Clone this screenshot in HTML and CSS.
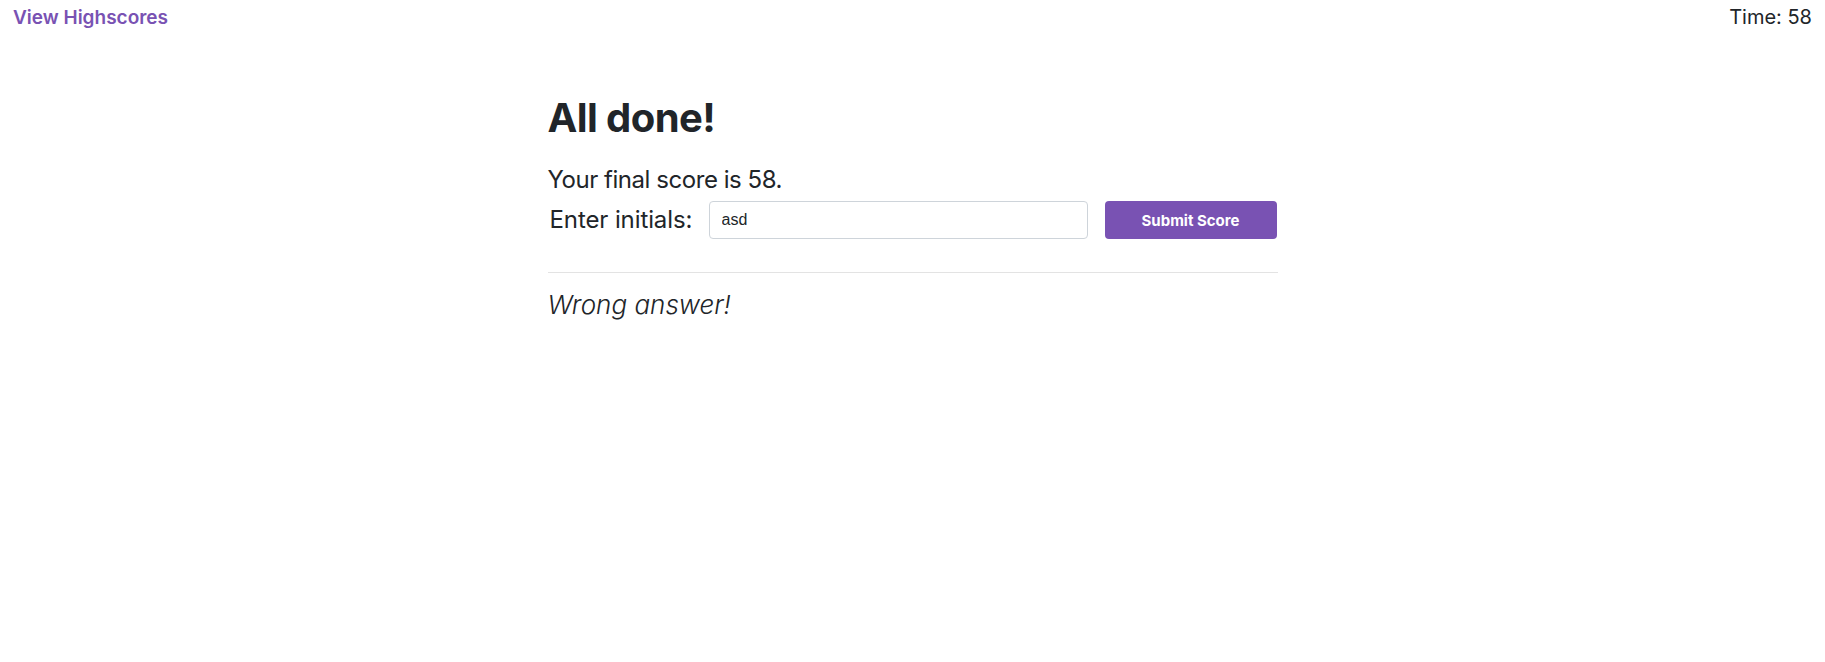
FILE: index.html
```html
<!DOCTYPE html>
<html lang="en">
<head>
<meta charset="utf-8">
<title>Code Quiz</title>
<link rel="stylesheet" href="styles.css">
</head>
<body>
<header class="topbar">
  <a class="highscores-link" href="#">View Highscores</a>
  <div class="timer">Time: 58</div>
</header>
<main class="quiz">
  <h1 class="title">All done!</h1>
  <p class="final-score">Your final score is 58.</p>
  <form class="initials-form">
    <label class="initials-label" for="initials">Enter initials:</label>
    <input class="initials-input" id="initials" type="text" value="asd">
    <button class="submit-btn" type="button">Submit Score</button>
  </form>
  <hr class="divider">
  <p class="feedback">Wrong answer!</p>
</main>
</body>
</html>
```

FILE: styles.css
```css
* { box-sizing: border-box; }

body {
  margin: 0;
  font-family: Inter, "Noto Sans", sans-serif;
  color: #212529;
  background: #fff;
}

.topbar {
  display: flex;
  justify-content: space-between;
  align-items: baseline;
  padding: 3px 13px 0 13px;
  height: 40px;
}

.highscores-link {
  color: #7952b3;
  text-decoration: none;
  font-size: 19px;
  font-weight: 600;
  line-height: 28px;
}

.timer {
  font-size: 20px;
  line-height: 28px;
}

.quiz {
  width: 730px;
  margin: 54px auto 0;
}

.title {
  margin: 0;
  font-size: 40px;
  font-weight: 700;
  line-height: 48px;
  letter-spacing: -0.6px;
}

.final-score {
  margin: 20px 0 0;
  font-size: 24px;
  line-height: 36px;
  letter-spacing: -0.45px;
}

.initials-form {
  display: flex;
  align-items: center;
  margin-top: 3px;
}

.initials-label {
  font-size: 24px;
  line-height: 36px;
  padding-left: 2px;
  width: 161px;
  letter-spacing: -0.1px;
}

.initials-input {
  width: 379px;
  height: 38px;
  border: 1px solid #ced4da;
  border-radius: 4px;
  padding: 6px 12px;
  font-family: "Liberation Sans", Arial, sans-serif;
  font-size: 16px;
  color: #212529;
}

.submit-btn {
  margin-left: 17px;
  width: 172px;
  height: 38px;
  border: none;
  border-radius: 4px;
  background: #7952b3;
  color: #fff;
  font-family: Inter, sans-serif;
  font-weight: 700;
  font-size: 15px;
}

.divider {
  margin: 33px 0 0;
  border: 0;
  border-top: 1px solid #e3e3e3;
}

.feedback {
  margin: 12px 0 0;
  font-size: 26px;
  font-style: italic;
  font-weight: 300;
  line-height: 39px;
}
```
